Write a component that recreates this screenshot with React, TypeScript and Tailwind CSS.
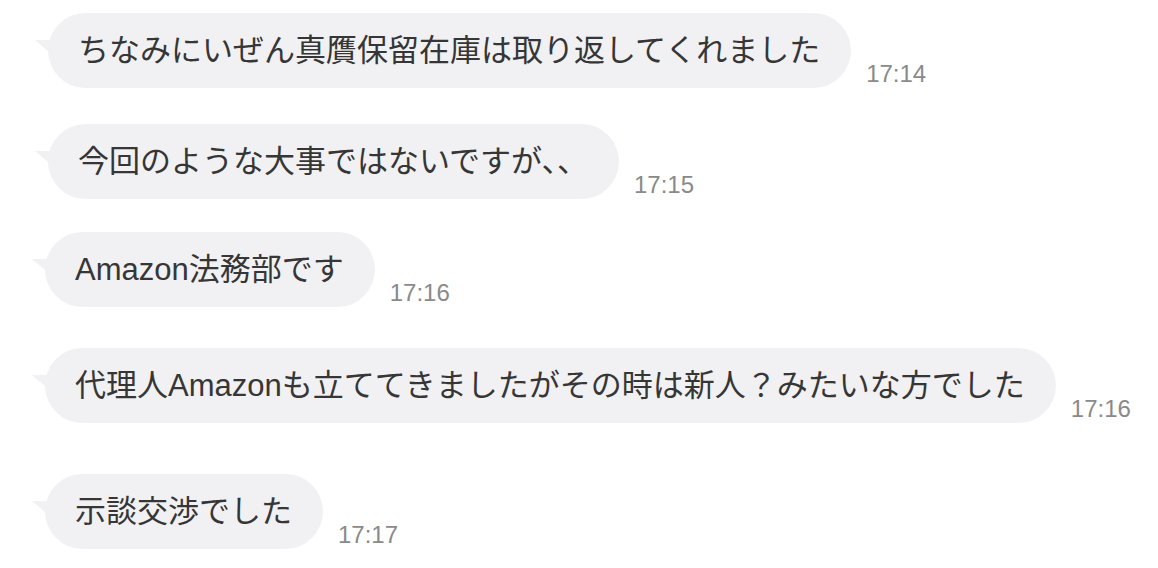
const messages = [
  { id: 1, text: 'ちなみにいぜん真贋保留在庫は取り返してくれました', time: '17:14', row: 'pl-[48px] mt-[13px]' },
  { id: 2, text: '今回のような大事ではないですが、、', time: '17:15', row: 'pl-[48px] mt-[36px]' },
  { id: 3, text: 'Amazon法務部です', time: '17:16', row: 'pl-[45px] mt-[33px]' },
  { id: 4, text: '代理人Amazonも立ててきましたがその時は新人？みたいな方でした', time: '17:16', row: 'pl-[45px] mt-[41px]' },
  { id: 5, text: '示談交渉でした', time: '17:17', row: 'pl-[45px] mt-[51px]' },
]

function Tail() {
  return (
    <svg
      className="absolute left-[-13px] top-[27px]"
      width="20"
      height="18"
      viewBox="0 0 20 18"
    >
      <path d="M0 0 H20 V17 C13 11 6 5 0 0 Z" fill="#f1f1f3" />
    </svg>
  )
}

export default function App() {
  return (
    <div
      className="w-[1158px] h-[568px] bg-white overflow-hidden"
      style={{ fontFamily: '"Liberation Sans", "Noto Sans CJK JP", sans-serif' }}
    >
      {messages.map((m) => (
        <div key={m.id} className={`flex items-end ${m.row}`}>
          <div className="relative h-[75px] flex items-center pl-[30px] pr-[31px] rounded-full bg-[#f1f1f3]">
            <Tail />
            <span className="text-[31px] leading-none text-[#363636] whitespace-nowrap">{m.text}</span>
          </div>
          <span className="ml-[15px] mb-[2px] text-[24px] leading-none text-[#8a8a8a]">{m.time}</span>
        </div>
      ))}
    </div>
  )
}
